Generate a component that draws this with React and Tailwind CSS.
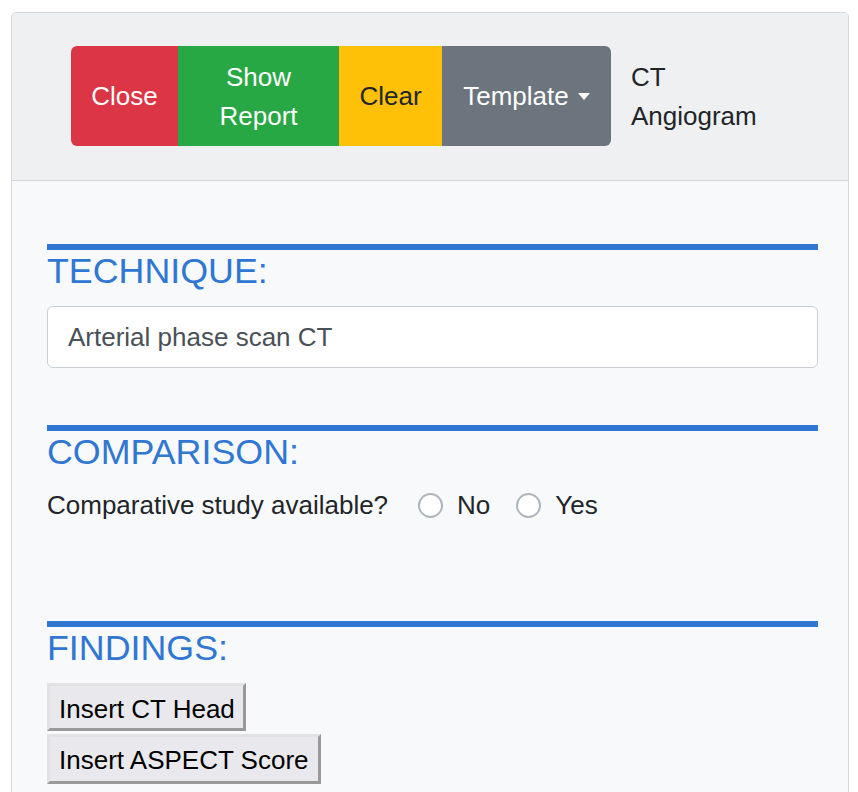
import { useState } from 'react'

const headerButtons = [
  { label: 'Close', width: 'w-[107px]', color: 'bg-[#dc3545] text-white rounded-l-[6px]' },
  { label: 'Show Report', width: 'w-[161px]', color: 'bg-[#28a745] text-white' },
  { label: 'Clear', width: 'w-[103px]', color: 'bg-[#ffc107] text-[#212529]' },
]

function SectionTitle({ children }) {
  return (
    <div>
      <div className="h-[6px] bg-[#2f77d3]" />
      <h2 className="text-[35.8px] leading-[42px] font-normal text-[#2f77d3]">{children}</h2>
    </div>
  )
}

function Radio({ label, checked, onClick }) {
  return (
    <label className="flex items-center gap-[14px] cursor-pointer" onClick={onClick}>
      <span className="w-[25px] h-[25px] rounded-full border-2 border-[#adb5bd] bg-white flex items-center justify-center">
        {checked && <span className="w-[11px] h-[11px] rounded-full bg-[#2f77d3]" />}
      </span>
      <span>{label}</span>
    </label>
  )
}

export default function App() {
  const [compare, setCompare] = useState(null)

  return (
    <div className="min-h-[792px] bg-white pt-3 pl-[11px] font-['Liberation_Sans',Arial,sans-serif] text-[26px] leading-[39px] text-[#212529]">
      <div className="w-[838px] border border-[#d4d6d9] rounded-t-[5px] overflow-hidden">
        <div className="bg-[#eff0f2] border-b border-[#d4d6d9] pt-[33px] pb-[34px] pl-[59px] flex items-center">
          <div className="flex h-[100px]">
            {headerButtons.map((b) => (
              <button
                key={b.label}
                className={`${b.width} ${b.color} px-[18px] pt-[1px] flex items-center justify-center text-center leading-[39px]`}
              >
                {b.label}
              </button>
            ))}
            <button className="w-[169px] bg-[#6c757d] text-white rounded-r-[6px] pt-[1px] flex items-center justify-center gap-[9px]">
              Template
              <span className="w-0 h-0 border-l-[6px] border-r-[6px] border-t-[7px] border-l-transparent border-r-transparent border-t-white" />
            </button>
          </div>
          <div className="ml-5 w-[140px] pt-[1px] leading-[39px]">CT Angiogram</div>
        </div>

        <div className="bg-[#f8f9fa] pl-[35px] pr-[30px] pt-[63px] pb-4">
          <SectionTitle>TECHNIQUE:</SectionTitle>
          <input
            className="mt-[14px] w-full h-[62px] bg-white border border-[#c9ced3] rounded-[6px] px-5 text-[#495057] outline-none"
            defaultValue="Arterial phase scan CT"
          />

          <div className="mt-[57px]">
            <SectionTitle>COMPARISON:</SectionTitle>
          </div>
          <div className="mt-[13px] flex items-center">
            <span>Comparative study available?</span>
            <div className="ml-[30px] flex items-center gap-[26px]">
              <Radio label="No" checked={compare === 'no'} onClick={() => setCompare('no')} />
              <Radio label="Yes" checked={compare === 'yes'} onClick={() => setCompare('yes')} />
            </div>
          </div>

          <div className="mt-[96px]">
            <SectionTitle>FINDINGS:</SectionTitle>
          </div>
          <div className="mt-[14px] flex flex-col items-start gap-[3px] text-black">
            <button className="h-[48px] pl-[9px] pr-[8px] pt-[3px] bg-[#e9e9ed] border-[3px] border-t-[#e2e2e4] border-l-[#e2e2e4] border-r-[#999999] border-b-[#999999] leading-none">
              Insert CT Head
            </button>
            <button className="h-[50px] pl-[9px] pr-[9px] pt-[2px] bg-[#e9e9ed] border-[3px] border-t-[#e2e2e4] border-l-[#e2e2e4] border-r-[#999999] border-b-[#999999] leading-none">
              Insert ASPECT Score
            </button>
          </div>
        </div>
      </div>
    </div>
  )
}
